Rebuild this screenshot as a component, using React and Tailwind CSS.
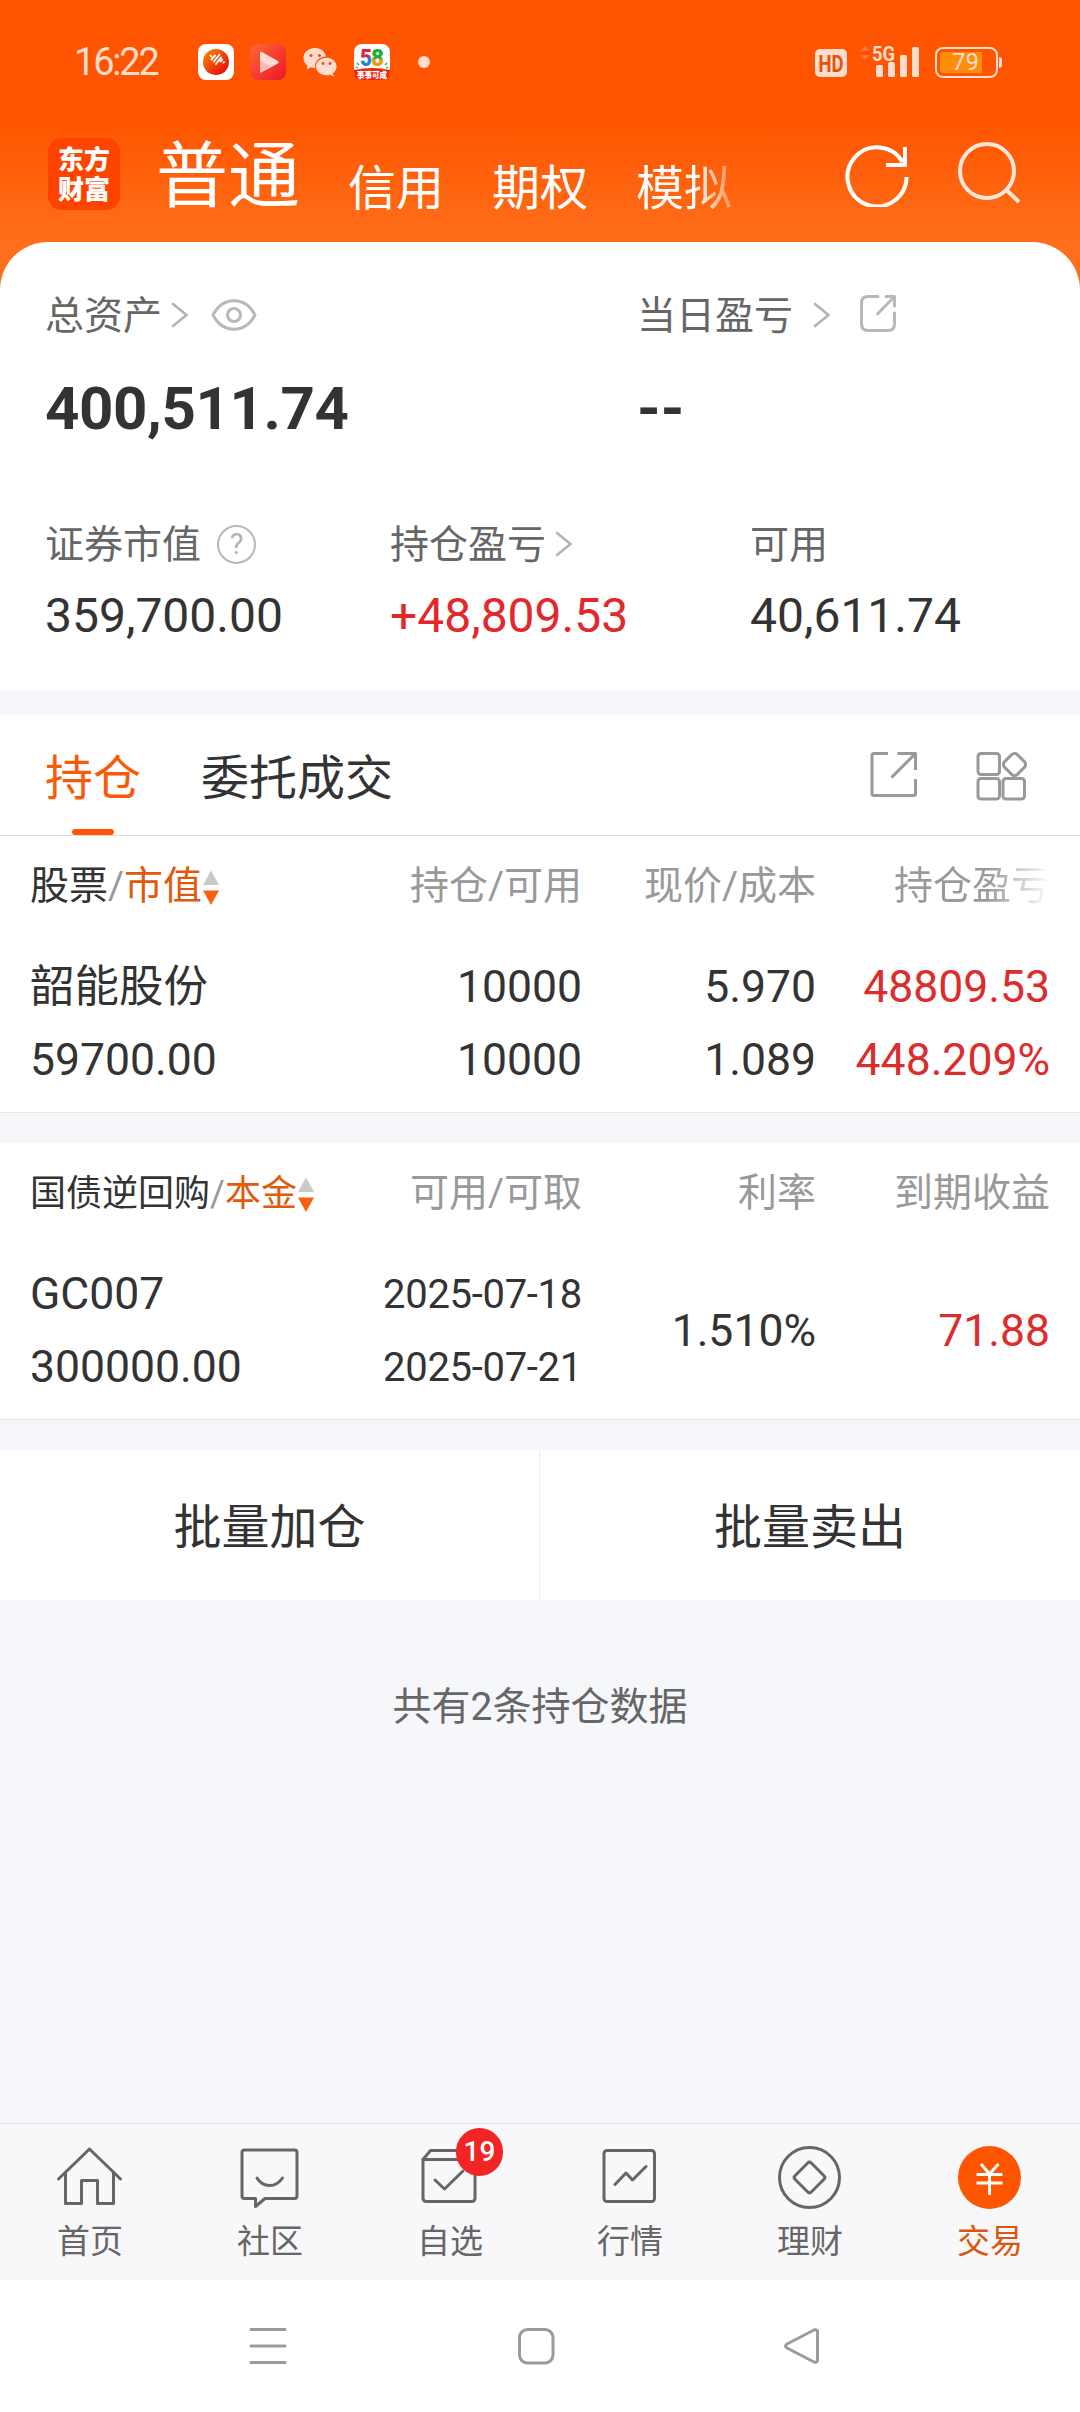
const accountTabs = ['信用', '期权', '模拟'];

const subAssets = [
    { label: '证券市值', value: '359,700.00', help: true, width: 'w-[345px]' },
    { label: '持仓盈亏', value: '+48,809.53', arrow: true, up: true, width: 'w-[360px]' },
    { label: '可用', value: '40,611.74', width: 'flex-1' },
];

const navItems = [
    { label: '首页', Icon: HomeIcon },
    { label: '社区', Icon: ChatIcon },
    { label: '自选', Icon: WatchIcon, badge: 19 },
    { label: '行情', Icon: MarketIcon },
    { label: '理财', Icon: WealthIcon },
    { label: '交易', Icon: TradeIcon, active: true },
];

/* ---------- icons ---------- */

function Stroke({ w, h, children, className = '', sw = 3 }) {
    return (
        <svg width={w} height={h} viewBox={`0 0 ${w} ${h}`} fill="none" stroke="currentColor" strokeWidth={sw} strokeLinejoin="round" strokeLinecap="round" className={`shrink-0 ${className}`}>
            {children}
        </svg>
    );
}

function Chevron({ className = '' }) {
    return (
        <Stroke w={18} h={28} sw={2.6} className={`text-[#b3b3b3] ${className}`}>
            <path d="M2 3 15.500 14 2 25" />
        </Stroke>
    );
}

function HomeIcon() {
    return (
        <Stroke w={66} h={66}>
            <path d="M1.500 33 32.500 3 63.500 33" />
            <path d="M8.500 27V57.500H24.500V34.500H40.500V57.500H56.500V27" />
        </Stroke>
    );
}

function ChatIcon() {
    return (
        <Stroke w={66} h={66}>
            <path d="M7.500 4H57.500Q60 4 60 6.500V50Q60 52.500 57.500 52.500H28L18.500 60.500V52.500H7.500Q5 52.500 5 50V6.500Q5 4 7.500 4Z" />
            <path d="M20 32C26 42 39 42 45.500 32" />
        </Stroke>
    );
}

function WatchIcon() {
    return (
        <Stroke w={66} h={66}>
            <path d="M6 13.500 13.500 4.500H50L58 13.500" />
            <path d="M6 13.500H58V52Q58 55.500 54.500 55.500H9.500Q6 55.500 6 52Z" />
            <path d="M18 34 27.500 43 46 25" />
        </Stroke>
    );
}

function MarketIcon() {
    return (
        <Stroke w={66} h={66}>
            <rect x="7" y="4.500" width="50.500" height="51" rx="3" />
            <path d="M18 38.500 29 27 35.500 34 49 20.500" />
        </Stroke>
    );
}

function WealthIcon() {
    return (
        <Stroke w={66} h={66}>
            <circle cx="32.500" cy="31.500" r="30" />
            <rect x="21" y="20" width="23" height="23" rx="2.500" transform="rotate(45 32.500 31.500)" />
        </Stroke>
    );
}

function TradeIcon() {
    return (
        <svg width="66" height="66" viewBox="0 0 66 66" fill="none">
            <circle cx="32.500" cy="31.500" r="31.500" fill="#ff5500" />
            <path d="M24 18 32.500 28 41.500 18M19.500 28.500H45.500M19.500 37H45.500M32.500 28V49" stroke="#fff" strokeWidth="3" />
        </svg>
    );
}

function SortArrows() {
    return (
        <svg width="16" height="36" viewBox="0 0 16 36" className="ml-px mt-[3px] shrink-0">
            <path d="M8 0.500 16 15H0Z" fill="#c9c9c9" />
            <path d="M8 35 16 20.500H0Z" fill="#f9600f" />
        </svg>
    );
}

/* ---------- sections ---------- */

function StatusBar() {
    return (
        <div className="flex h-[124px] items-center pl-[74px] pr-[78px] text-[#ffdccb]">
            <span className="w-[124px] text-[38px] leading-none tracking-[-2.2px]">16:22</span>
            <div className="flex items-center gap-4">
                <svg width="36" height="36" viewBox="0 0 36 36">
                    <defs>
                        <linearGradient id="ball" x1="0" y1="0" x2="1" y2="1">
                            <stop offset="0" stopColor="#ff8a00" />
                            <stop offset="1" stopColor="#e00010" />
                        </linearGradient>
                    </defs>
                    <rect width="36" height="36" rx="8" fill="#fff" />
                    <circle cx="18" cy="18" r="13" fill="url(#ball)" />
                    <path d="M12.500 11.500 13.200 12.500M13.500 15.500 17 11.500M16 17.500 21.500 10.500M18 20 23 13.500M22.500 17.500 24 15.500M25.500 18.500 26 18" stroke="#fff" strokeWidth="1.900" strokeLinecap="round" />
                </svg>
                <svg width="36" height="36" viewBox="0 0 36 36">
                    <defs>
                        <linearGradient id="play" x1="0" y1="0" x2="1" y2="1">
                            <stop offset="0" stopColor="#fb6a35" />
                            <stop offset="1" stopColor="#f0142a" />
                        </linearGradient>
                    </defs>
                    <rect width="36" height="36" rx="8" fill="url(#play)" />
                    <path d="M12 8Q10 7 10 9V27Q10 29.500 12 28L28 19.500Q29.500 18 28 17Z" fill="#ffd9d3" />
                    <path d="M10 16 20 22 10 28Z" fill="#ffb9b0" />
                </svg>
                <svg width="36" height="36" viewBox="0 0 36 36" fill="#ffdccb">
                    <path d="M13 4C6.500 4 1.500 8.400 1.500 14C1.500 17.200 3 20 5.600 21.800L4.600 25.500 8.800 23.300C10.300 23.800 11.500 24 13.400 24C12 17.500 17 12.600 24 12.400C23 7.500 18.500 4 13 4Z" />
                    <path d="M24.500 13.800C18.600 13.800 14 17.800 14 22.600C14 27.500 18.600 31.300 24.500 31.300C25.800 31.300 27 31 28.200 30.700L31.800 32.600 30.900 29.400C33.300 27.800 34.600 25.300 34.600 22.600C34.600 17.800 30.200 13.800 24.500 13.800Z" />
                    <g fill="#e8500c">
                        <circle cx="9" cy="11.500" r="1.600" />
                        <circle cx="17.500" cy="11.500" r="1.600" />
                        <circle cx="21" cy="19.500" r="1.400" />
                        <circle cx="28" cy="19.500" r="1.400" />
                    </g>
                </svg>
                <svg width="36" height="36" viewBox="0 0 36 36" className="overflow-visible">
                    <defs>
                        <linearGradient id="five" x1="0" y1="0" x2="0" y2="1">
                            <stop offset="0.450" stopColor="#e5213a" />
                            <stop offset="0.550" stopColor="#1488d8" />
                        </linearGradient>
                        <linearGradient id="eight" x1="0" y1="0" x2="0" y2="1">
                            <stop offset="0.500" stopColor="#1fae2f" />
                            <stop offset="0.600" stopColor="#f39a10" />
                        </linearGradient>
                    </defs>
                    <rect width="36" height="36" rx="8" fill="#fff" />
                    <path d="M0 26Q18 22 36 26V28Q36 36 28 36H8Q0 36 0 28Z" fill="#f2260f" />
                    <path d="M3 19 5 21M2 23 4 24M33 19 31 21M34 23 32 24" stroke="#1fae2f" strokeWidth="1.200" />
                    <g fontWeight="900">
                        <text x="6" y="21.500" fontSize="24" textLength="12" lengthAdjust="spacingAndGlyphs" fill="url(#five)">5</text>
                        <text x="17" y="21.500" fontSize="24" textLength="13" lengthAdjust="spacingAndGlyphs" fill="url(#eight)">8</text>
                        <text x="3" y="33.500" fontSize="8.500" textLength="30" lengthAdjust="spacingAndGlyphs" fill="#fff">事事可成</text>
                    </g>
                </svg>
            </div>
            <span className="ml-7 h-3 w-3 rounded-full bg-[#ffdccb]" />

            <div className="ml-auto flex items-center">
                <svg width="32" height="28" viewBox="0 0 32 28" className="mt-[2px] overflow-visible">
                    <rect width="32" height="28" rx="5" fill="#ffdccb" />
                    <text x="3.500" y="22.500" fontSize="24" fontWeight="700" textLength="25" lengthAdjust="spacingAndGlyphs" fill="#e8500c">HD</text>
                </svg>
                <svg width="62" height="36" viewBox="0 0 62 36" className="ml-3 overflow-visible" fill="#ffdccb">
                    <path d="M6 2 11 7H1ZM6 16 11 11H1Z" fill="#ff7433" />
                    <text x="13" y="16.500" fontSize="21" fontWeight="700" textLength="23" lengthAdjust="spacingAndGlyphs">5G</text>
                    <rect x="17" y="21" width="7" height="12" rx="1.500" />
                    <rect x="29" y="18" width="7" height="15" rx="1.500" />
                    <rect x="41" y="11" width="7" height="22" rx="1.500" />
                    <rect x="53" y="3" width="7" height="30" rx="1.500" />
                </svg>
                <div className="ml-[14px] flex h-[31px] w-[63px] items-center rounded-[8px] border-2 border-[#ffdccb] p-[3px]">
                    <div className="flex h-full w-[42px] items-center justify-end rounded-l-[4px] bg-[#ff8c0a] pr-[3px] text-[24px] leading-none">79</div>
                </div>
                <span className="ml-px h-[11px] w-[3px] rounded-r bg-[#ffdccb]" />
            </div>
        </div>
    );
}

function AccountBar() {
    return (
        <div className="flex h-[118px] items-start pl-12 pr-[57px] text-white">
            <div className="mt-[14px] flex h-[72px] w-[72px] flex-col items-center justify-center rounded-[14px] bg-[#ff4400] pt-[2px] text-[26px] font-black leading-[30px]">
                <span>东方</span>
                <span>财富</span>
            </div>
            <div className="ml-9 mt-[17px] flex items-end gap-12 leading-none">
                <span className="text-[72px] leading-none">普通</span>
                {accountTabs.map((tab) => (
                    <span
                        key={tab}
                        className={
                            tab === '模拟'
                                ? 'bg-gradient-to-r from-white from-60% to-white/30 bg-clip-text text-5xl leading-none text-transparent'
                                : 'text-5xl leading-none'
                        }
                    >
                        {tab}
                    </span>
                ))}
            </div>
            <Stroke w={66} h={66} sw={4} className="ml-auto mt-[17px]">
                <g strokeLinecap="butt" strokeLinejoin="miter">
                    <path d="M61.500 36A29.500 29.500 0 1 1 57.500 21" />
                    <path d="M60 6V24H41" />
                </g>
            </Stroke>
            <Stroke w={66} h={66} sw={4} className="ml-[46px] mt-[17px] text-[#ffe6da]">
                <circle cx="30" cy="30" r="27" />
                <path d="M49.500 49 62 61" strokeLinecap="butt" />
            </Stroke>
        </div>
    );
}

function AssetSummary() {
    return (
        <div className="h-[449px] rounded-t-[48px] bg-white px-[45px] pt-[48px] text-[39px] leading-none text-[#666]">
            <div className="flex">
                <div className="w-[592px]">
                    <div className="flex h-[50px] items-center">
                        <span className="mt-[3px]">总资产</span>
                        <Chevron className="ml-[9px]" />
                        <Stroke w={46} h={34} className="ml-[22px] text-[#b8b8b8]">
                            <path d="M2 17C12-2 34-2 44 17C34 36 12 36 2 17Z" />
                            <circle cx="23" cy="17" r="6.500" />
                        </Stroke>
                    </div>
                    <div className="mt-[39px] text-[60px] font-bold tracking-[-0.400px] text-[#333]">400,511.74</div>
                </div>
                <div>
                    <div className="flex h-[50px] items-center">
                        <span className="mt-[3px]">当日盈亏</span>
                        <Chevron className="ml-5" />
                        <Stroke w={40} h={40} className="ml-[27px] mb-1 text-[#b8b8b8]">
                            <path d="M20 3.500H10Q3.500 3.500 3.500 10V31Q3.500 37.500 10 37.500H30Q36.500 37.500 36.500 31V20" />
                            <path d="M28 3.500H36.500V13M36.500 3.500 19.500 21" />
                        </Stroke>
                    </div>
                    <div className="mt-[39px] text-[60px] font-bold text-[#333]">--</div>
                </div>
            </div>

            <div className="mt-[80px] flex">
                {subAssets.map((item) => (
                    <div key={item.label} className={item.width}>
                        <div className="flex h-[50px] items-center">
                            <span className="mt-[3px]">{item.label}</span>
                            {item.help && (
                                <span className="ml-4 flex h-[39px] w-[39px] items-center justify-center rounded-full border-[2.5px] border-[#b8b8b8] text-[29px] text-[#b3b3b3]">?</span>
                            )}
                            {item.arrow && <Chevron className="ml-[9px]" />}
                        </div>
                        <div className={`mt-[23px] text-5xl leading-none ${item.up ? 'text-[#e3282c]' : 'text-[#333]'}`}>{item.value}</div>
                    </div>
                ))}
            </div>
        </div>
    );
}

function PositionTabs() {
    return (
        <div className="flex h-[121px] items-stretch border-b border-[#dcdcdc] bg-white pl-[45px] pr-[51px] text-5xl leading-none">
            <div className="flex w-24 flex-col items-center text-[#f95a08]">
                <span className="mt-10">持仓</span>
                <span className="mt-auto h-[6px] w-[42px] rounded-full bg-[#ff5500]" />
            </div>
            <span className="ml-[60px] mt-10 text-[#333]">委托成交</span>
            <Stroke w={50} h={50} className="ml-auto mt-[35px] text-[#999]">
                <path d="M20 3.500H6Q4 3.500 4 5.500V43.500Q4 45.500 6 45.500H45.500Q47.500 45.500 47.500 43.500V29" strokeLinecap="butt" />
                <path d="M29.500 3.500H47.500V20M47.500 3.500 23.500 27.500" strokeLinecap="butt" />
            </Stroke>
            <Stroke w={54} h={54} className="ml-[57px] mt-[34px] text-[#999]">
                <rect x="3" y="4.500" width="21.500" height="21" rx="3" />
                <rect x="3" y="29.500" width="21.500" height="20.500" rx="3" />
                <rect x="28" y="29.500" width="21.500" height="20.500" rx="3" />
                <rect x="30.500" y="6.500" width="18" height="18" rx="4" transform="rotate(45 39.500 15.500)" />
            </Stroke>
        </div>
    );
}

function HoldingRow({ cols, align = 'items-stretch' }) {
    return (
        <div className={`flex pl-[30px] pr-[30px] text-[44.5px] leading-[73px] text-[#333] ${align}`}>
            {cols.map((col, i) => (
                <div
                    key={i}
                    className={`flex flex-col whitespace-nowrap ${i === 0 ? 'w-[318px]' : 'w-[234px] items-end'} ${col.className || ''}`}
                >
                    {col.lines.map((line, j) => (
                        <span key={j} className="h-[73px]">{line}</span>
                    ))}
                </div>
            ))}
        </div>
    );
}

function StockHoldings() {
    return (
        <div className="h-[277px] border-b border-[#e6e6ea] bg-white">
            <div className="flex h-[98px] items-center pl-[30px] pr-[30px] pt-[3px] text-[39px] leading-none text-[#999]">
                <div className="flex w-[318px] items-center">
                    <span className="text-[#333]">股票</span>
                    <span>/</span>
                    <span className="text-[#e05a0c]">市值</span>
                    <SortArrows />
                </div>
                <span className="w-[234px] text-right">持仓/可用</span>
                <span className="w-[234px] text-right">现价/成本</span>
                <span className="w-[234px] text-right">
                    <span className="bg-gradient-to-r from-[#999] from-60% to-white bg-clip-text text-transparent">持仓盈亏</span>
                </span>
            </div>
            <div className="mt-[17px]">
                <HoldingRow
                    cols={[
                        { lines: ['韶能股份', '59700.00'] },
                        { lines: ['10000', '10000'] },
                        { lines: ['5.970', '1.089'] },
                        { lines: ['48809.53', '448.209%'], className: 'text-[#dc2c2c]' },
                    ]}
                />
            </div>
        </div>
    );
}

function RepoHoldings() {
    return (
        <div className="mt-[30px] h-[277px] border-b border-[#e6e6ea] bg-white">
            <div className="flex h-[98px] items-center pl-[30px] pr-[30px] pt-[3px] text-[39px] leading-none text-[#999]">
                <div className="flex w-[318px] items-center whitespace-nowrap text-4xl leading-none">
                    <span className="text-[#333]">国债逆回购</span>
                    <span>/</span>
                    <span className="text-[#e05a0c]">本金</span>
                    <SortArrows />
                </div>
                <span className="w-[234px] text-right">可用/可取</span>
                <span className="w-[234px] text-right">利率</span>
                <span className="w-[234px] text-right">到期收益</span>
            </div>
            <div className="mt-[17px]">
                <HoldingRow
                    align="items-center"
                    cols={[
                        { lines: ['GC007', '300000.00'] },
                        { lines: ['2025-07-18', '2025-07-21'], className: 'text-[40px] tracking-[-0.300px]' },
                        { lines: ['1.510%'] },
                        { lines: ['71.88'], className: 'text-[#dc2c2c]' },
                    ]}
                />
            </div>
        </div>
    );
}

function BottomNav() {
    return (
        <nav className="flex h-[157px] border-t border-[#e0e0e2] bg-[#f8f8fb]">
            {navItems.map(({ label, Icon, badge, active }) => (
                <div key={label} className={`relative flex w-[180px] flex-col items-center pt-[22px] text-[33px] leading-none ${active ? 'text-[#d9580f]' : 'text-[#666]'}`}>
                    <Icon />
                    <span className="mt-[13px]">{label}</span>
                    {badge && (
                        <span className="absolute left-24 top-1 flex h-12 w-[47px] items-center justify-center rounded-full bg-[#f22424] text-[28px] font-medium text-white">
                            {badge}
                        </span>
                    )}
                </div>
            ))}
        </nav>
    );
}

function SystemNav() {
    return (
        <div className="flex h-[132px] items-center bg-white pl-[249px] pr-[260px] text-[#9b9b9b]">
            <Stroke w={38} h={38}>
                <path d="M2 2.500H36M2 19H36M2 35.500H36" />
            </Stroke>
            <Stroke w={38} h={38} className="ml-[230px]">
                <rect x="2.500" y="2.500" width="33.500" height="33.500" rx="8" />
            </Stroke>
            <Stroke w={38} h={38} className="ml-auto">
                <path d="M32 3 5 17Q2 19 5 21L32 35Q35.500 36 35.500 33V5Q35.500 2 32 3Z" />
            </Stroke>
        </div>
    );
}

export default function App() {
    return (
        <div className="flex h-[2412px] w-[1080px] flex-col overflow-hidden bg-[#f6f7fa] font-[Roboto,'Noto_Sans_CJK_SC',sans-serif]">
            <header className="bg-[linear-gradient(#ff5500_120px,#ff6e1a_240px)]">
                <StatusBar />
                <AccountBar />
                <AssetSummary />
            </header>

            <main className="mt-6 flex-1">
                <PositionTabs />
                <StockHoldings />
                <RepoHoldings />

                {/* Batch actions */}
                <div className="mt-[30px] flex h-[150px] bg-white text-5xl leading-none text-[#333]">
                    <button className="w-[540px] border-r border-[#ededf0] pt-[5px]">批量加仓</button>
                    <button className="flex-1 pt-[5px]">批量卖出</button>
                </div>

                <p className="mt-[88px] text-center text-[39px] leading-none text-[#666]">共有2条持仓数据</p>
            </main>

            <BottomNav />
            <SystemNav />
        </div>
    );
}
